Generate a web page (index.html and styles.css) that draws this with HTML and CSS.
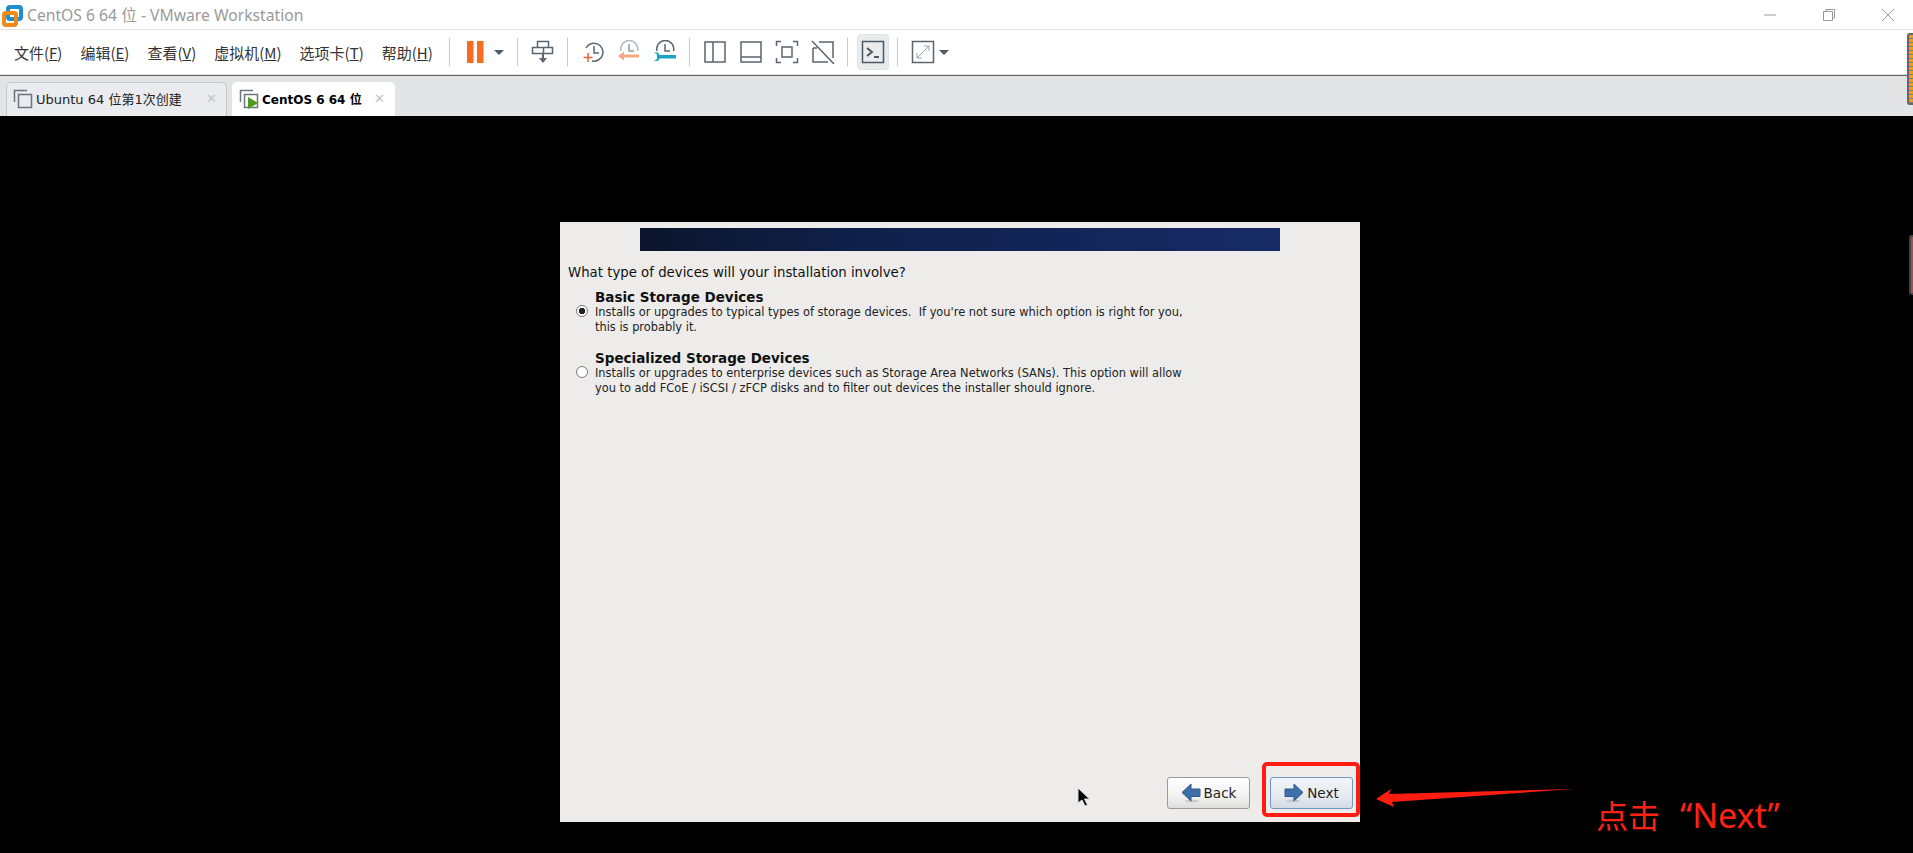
FILE: index.html
```html
<!DOCTYPE html>
<html lang="zh-CN">
<head>
    <meta charset="UTF-8">
    <title>CentOS 6 64 位 - VMware Workstation</title>
    <link rel="stylesheet" href="styles.css">
</head>
<body>
    <div class="titlebar">
        <svg class="app-logo" width="22" height="26" viewBox="0 0 22 26">
            <rect x="7" y="5" width="13" height="12" rx="2" fill="none" stroke="#1f8fc9" stroke-width="4"/>
            <rect x="3" y="11" width="12" height="12" rx="2" fill="none" stroke="#f08a16" stroke-width="4"/>
        </svg>
        <span class="app-title">CentOS 6 64 位 - VMware Workstation</span>
        <div class="win-buttons">
            <svg width="14" height="14" viewBox="0 0 14 14"><path d="M1 7h12" stroke="#999" stroke-width="1"/></svg>
            <svg width="14" height="14" viewBox="0 0 14 14"><path d="M1.500 3.500h9v9h-9zM4 3.500V1.500h8.500v8.500h-2" fill="none" stroke="#999" stroke-width="1"/></svg>
            <svg width="14" height="14" viewBox="0 0 14 14"><path d="M1 1l12 12M13 1L1 13" stroke="#999" stroke-width="1"/></svg>
        </div>
    </div>

    <div class="toolbar">
        <div class="menu">
            <span>文件(<u>F</u>)</span>
            <span>编辑(<u>E</u>)</span>
            <span>查看(<u>V</u>)</span>
            <span>虚拟机(<u>M</u>)</span>
            <span>选项卡(<u>T</u>)</span>
            <span>帮助(<u>H</u>)</span>
        </div>
        <i class="sep first"></i>
        <div class="tool">
            <svg width="24" height="24" viewBox="0 0 24 24"><path d="M4 1h6.500v22H4zM14 1h6.500v22H14z" fill="#f96b21"/></svg>
        </div>
        <i class="caret"></i>
        <i class="sep"></i>
        <div class="tool">
            <svg width="24" height="24" viewBox="0 0 24 24" fill="none" stroke="#5a6670" stroke-width="1.500"><path d="M6.500 1.500h11v6h-11zM1.500 7.500h11v6h-11zM12.500 7.500h9v6h-9z"/><path d="M12 14v5" stroke-width="2"/><path d="M8 18h8l-4 5z" fill="#5a6670" stroke="none"/></svg>
        </div>
        <i class="sep"></i>
        <div class="tool">
            <svg width="24" height="24" viewBox="0 0 24 24" fill="none"><path d="M5 8a9 9 0 1 1 6 13" stroke="#5a6670" stroke-width="1.500"/><path d="M13 6v7h5" stroke="#5a6670" stroke-width="1.500"/><path d="M7 13v9M2.500 17.500h9" stroke="#e8643a" stroke-width="1.500"/></svg>
        </div>
        <div class="tool">
            <svg width="24" height="24" viewBox="0 0 24 24" fill="none"><path d="M4 11a8.500 8.500 0 1 1 16.500 0" stroke="#b4bcc2" stroke-width="1.500"/><path d="M12 4v7h5" stroke="#8f99a1" stroke-width="1.500"/><path d="M1 16l6-4.500v3h15v3H7v3z" fill="#f4a886"/></svg>
        </div>
        <div class="tool">
            <svg width="24" height="24" viewBox="0 0 24 24" fill="none"><path d="M4 11a8.500 8.500 0 1 1 16.500 0" stroke="#5a6670" stroke-width="1.500"/><path d="M12 4v7h5" stroke="#5a6670" stroke-width="1.500"/><path d="M1 12.500h4l1.500 2.500H23v3.500H6.500L5 21H1l3-2v-4.500z" fill="#16a6c2"/></svg>
        </div>
        <i class="sep"></i>
        <div class="tool">
            <svg width="24" height="24" viewBox="0 0 24 24" fill="none" stroke="#5a6670" stroke-width="1.500"><path d="M2 2h20v20H2zM10 2v20"/></svg>
        </div>
        <div class="tool">
            <svg width="24" height="24" viewBox="0 0 24 24" fill="none" stroke="#5a6670" stroke-width="1.500"><path d="M2 2h20v20H2zM2 17h20"/></svg>
        </div>
        <div class="tool">
            <svg width="24" height="24" viewBox="0 0 24 24" fill="none" stroke="#5a6670" stroke-width="1.500"><path d="M1.500 6V1.500H6M18 1.500h4.500V6M22.500 18v4.500H18M6 22.500H1.500V18M7 7h10v10H7z"/></svg>
        </div>
        <div class="tool">
            <svg width="24" height="24" viewBox="0 0 24 24" fill="none" stroke="#5a6670" stroke-width="1.500"><path d="M8 2h14v16M2 8v14h15M2 8h4M1 1l22 23"/></svg>
        </div>
        <i class="sep"></i>
        <div class="tool active">
            <svg width="24" height="24" viewBox="0 0 24 24" fill="none" stroke="#4d5963" stroke-width="1.500"><path d="M1.500 1.500h21v21h-21z"/><path d="M6 8l5 4-5 4" stroke-width="2"/><path d="M13 17h5" stroke-width="2"/></svg>
        </div>
        <i class="sep"></i>
        <div class="tool">
            <svg width="24" height="24" viewBox="0 0 24 24" fill="none" stroke="#5a6670" stroke-width="1.500"><path d="M1.500 1.500h21v21h-21z"/><path d="M6 18L18 6M13 6h5v5M6 13v5h5" stroke="#98a2aa" stroke-width="1"/></svg>
        </div>
        <i class="caret tight"></i>
    </div>

    <div class="tabstrip">
        <div class="tab">
            <svg width="20" height="20" viewBox="0 0 20 20" fill="none" stroke="#6b757d" stroke-width="1.500"><path d="M1.500 13V1.500H14"/><path d="M5.500 5.500h13v13h-13z"/></svg>
            <span class="tab-label">Ubuntu 64 位第1次创建</span>
            <span class="tab-close">✕</span>
        </div>
        <div class="tab current">
            <svg width="20" height="20" viewBox="0 0 20 20" fill="none" stroke="#6b757d" stroke-width="1.500"><path d="M1.500 13V1.500H14"/><path d="M5.500 5.500h13v13h-13z"/><path d="M9 8l10 6-10 6z" fill="#4e9a1e" stroke="none"/></svg>
            <span class="tab-label">CentOS 6 64 位</span>
            <span class="tab-close">✕</span>
        </div>
    </div>

    <div class="vm-screen">
        <div class="installer">
            <div class="banner"></div>
            <div class="question">What type of devices will your installation involve?</div>
            <div class="option first">
                <span class="radio checked"></span>
                <div>
                    <div class="opt-title">Basic Storage Devices</div>
                    <div class="opt-desc">Installs or upgrades to typical types of storage devices.  If you're not sure which option is right for you,
this is probably it.</div>
                </div>
            </div>
            <div class="option">
                <span class="radio"></span>
                <div>
                    <div class="opt-title">Specialized Storage Devices</div>
                    <div class="opt-desc">Installs or upgrades to enterprise devices such as Storage Area Networks (SANs). This option will allow
you to add FCoE / iSCSI / zFCP disks and to filter out devices the installer should ignore.</div>
                </div>
            </div>
            <div class="nav-buttons">
                <div class="btn">
                    <svg width="20" height="20" viewBox="0 0 20 20"><ellipse cx="11" cy="18" rx="7" ry="1.500" fill="#c9c9c9"/><path d="M1 9.500L10 1v5h9v7.500h-9V18z" fill="#3f6fa8" stroke="#2f5a91"/></svg>
                    Back
                </div>
                <div class="btn focused">
                    <svg width="20" height="20" viewBox="0 0 20 20"><ellipse cx="9" cy="18" rx="7" ry="1.500" fill="#c4c8ce"/><path d="M19 9.500L10 1v5H1v7.500h9V18z" fill="#3f6fa8" stroke="#2f5a91"/></svg>
                    Next
                </div>
            </div>
        </div>
    </div>

    <div class="handle-top"></div>
    <div class="handle-side"></div>
    <svg class="cursor" width="14" height="20" viewBox="0 0 14 20"><path d="M1 1v15l4-3 3 6 2.500-1-3-6h5z" fill="#000" stroke="#ddd" stroke-width="1"/></svg>
    <div class="mark-box"></div>
    <svg class="mark-arrow" width="200" height="20" viewBox="0 0 200 20"><path d="M0 12L15 2l-2 5 185-5L16 15l2 5z" fill="#ff1c10"/></svg>
    <div class="mark-text">点击<span class="mark-word">“Next”</span></div>
</body>
</html>
```

FILE: styles.css
```css
body {
    margin: 0;
    width: 1913px;
    height: 853px;
    overflow: hidden;
    display: flex;
    flex-direction: column;
    background: #000;
    font-family: "Noto Sans", "Noto Sans CJK SC", sans-serif;
}
.titlebar {
    height: 29px;
    display: flex;
    align-items: center;
    background: #fff;
    border-bottom: 1px solid #e3e3e3;
}
.app-logo {
    margin-left: 1px;
}
.app-title {
    margin-left: 4px;
    font-size: 15.700px;
    color: #9a9a9a;
}
.win-buttons {
    margin-left: auto;
    margin-right: 18px;
    display: flex;
    gap: 45px;
}
.toolbar {
    height: 44px;
    display: flex;
    align-items: center;
    padding-left: 14px;
    background: #fff;
    border-bottom: 1px solid #e2e2e2;
    box-shadow: inset 0 -1px 0 #fff;
}
.menu {
    display: flex;
    flex: none;
    gap: 18px;
    width: 421px;
    font-size: 15px;
    color: #333;
    white-space: nowrap;
    font-family: "Noto Sans CJK SC", "Noto Sans", sans-serif;
}
.sep {
    display: block;
    width: 1px;
    height: 28px;
    margin: 0 7px 0 6px;
    background: #c8c8c8;
}
.sep.first {
    margin-left: 14px;
}
.tool {
    width: 36px;
    height: 36px;
    display: flex;
    align-items: center;
    justify-content: center;
    box-sizing: border-box;
}
.tool.active {
    background: #e9ebed;
    border: 1px solid #e0e2e4;
    border-radius: 4px;
    width: 32px;
    margin: 0 2px;
}
.caret {
    display: block;
    width: 0;
    height: 0;
    margin: 0 7px 0 1px;
    border-left: 5px solid transparent;
    border-right: 5px solid transparent;
    border-top: 5px solid #4d5963;
}
.caret.tight {
    margin-left: -2px;
}
.tabstrip {
    height: 41px;
    display: flex;
    align-items: flex-end;
    gap: 5px;
    padding-left: 6px;
    background: #e3e4e6;
    border-top: 1px solid #5f5f5f;
    box-sizing: border-box;
}
.tab {
    height: 34px;
    display: flex;
    align-items: center;
    box-sizing: border-box;
    padding-left: 6px;
    width: 221px;
    background: #e9ebee;
    border: 1px solid #c4c6c9;
    border-bottom: none;
    border-radius: 5px 5px 0 0;
    font-family: "DejaVu Sans", "Noto Sans CJK SC", sans-serif;
    font-size: 13px;
    color: #222;
    padding-bottom: 2px;
}
.tab.current {
    width: 163px;
    background: #fff;
    border-color: #fff;
    color: #000;
    font-weight: bold;
    font-size: 12px;
}
.tab-label {
    margin-left: 3px;
    white-space: nowrap;
}
.tab-close {
    margin-left: auto;
    margin-right: 9px;
    color: #c2c4c6;
    font-size: 13px;
    font-weight: bold;
}
.vm-screen {
    flex: 1;
    padding: 106px 0 0 560px;
}
.installer {
    width: 800px;
    height: 600px;
    display: flex;
    flex-direction: column;
    box-sizing: border-box;
    padding-top: 6px;
    background: #edeceb;
    font-family: "DejaVu Sans", sans-serif;
    color: #111;
}
.banner {
    width: 640px;
    height: 23px;
    margin-left: 80px;
    background: linear-gradient(90deg, #0b152c, #10204a 35%, #172b66);
}
.question {
    margin: 13px 0 0 8px;
    font-size: 13.300px;
    line-height: 18px;
}
.option {
    display: flex;
    align-items: center;
    margin-top: 15px;
    padding-left: 16px;
}
.option.first {
    margin-top: 7px;
}
.radio {
    width: 10px;
    height: 10px;
    margin-right: 7px;
    margin-top: -2px;
    border: 1px solid #7a7a7a;
    border-radius: 50%;
    background: #fff;
    flex: none;
}
.radio.checked {
    background: radial-gradient(circle, #222 0 3px, #fff 3.500px);
}
.opt-title {
    font-size: 13.500px;
    font-weight: bold;
    line-height: 16px;
}
.opt-desc {
    font-size: 11.400px;
    line-height: 15px;
    white-space: pre;
    color: #222;
}
.nav-buttons {
    margin-top: auto;
    margin-bottom: 13px;
    padding-right: 7px;
    display: flex;
    justify-content: flex-end;
    gap: 20px;
}
.btn {
    width: 83px;
    height: 32px;
    display: flex;
    align-items: center;
    justify-content: center;
    gap: 3px;
    box-sizing: border-box;
    border: 1px solid #9a9a9a;
    border-radius: 3px;
    background: linear-gradient(180deg, #fff, #f2f2f1 60%, #dededd);
    font-size: 13.500px;
    color: #222;
}
.btn.focused {
    border-color: #6f97c4;
    background: linear-gradient(180deg, #f1f4f9, #e6eaf0 60%, #d5dbe3);
}
/* things lying over the screenshot */
.handle-top {
    position: absolute;
    left: 1907px;
    top: 33px;
    width: 6px;
    height: 72px;
    box-sizing: border-box;
    border: 2px solid #666;
    border-right: none;
    border-radius: 3px 0 0 3px;
    background: repeating-linear-gradient(180deg, #f59a1a 0 3px, #7a7f88 3px 4px);
}
.handle-side {
    position: absolute;
    left: 1909px;
    top: 235px;
    width: 4px;
    height: 60px;
    box-sizing: border-box;
    border: 2px solid #444;
    border-right: none;
    border-radius: 3px 0 0 3px;
    background: #a05050;
}
.cursor {
    position: absolute;
    left: 1077px;
    top: 787px;
}
.mark-box {
    position: absolute;
    left: 1262px;
    top: 762px;
    width: 98px;
    height: 55px;
    box-sizing: border-box;
    border: 4px solid #ff1c10;
    border-radius: 5px;
}
.mark-arrow {
    position: absolute;
    left: 1376px;
    top: 787px;
}
.mark-text {
    position: absolute;
    left: 1596px;
    top: 792px;
    font-size: 32px;
    line-height: 44px;
    color: #ff2214;
    white-space: pre;
    font-family: "Noto Sans CJK SC", sans-serif;
}
.mark-word {
    margin-left: 20px;
    font-size: 34px;
    font-family: "Noto Sans", sans-serif;
}
```
